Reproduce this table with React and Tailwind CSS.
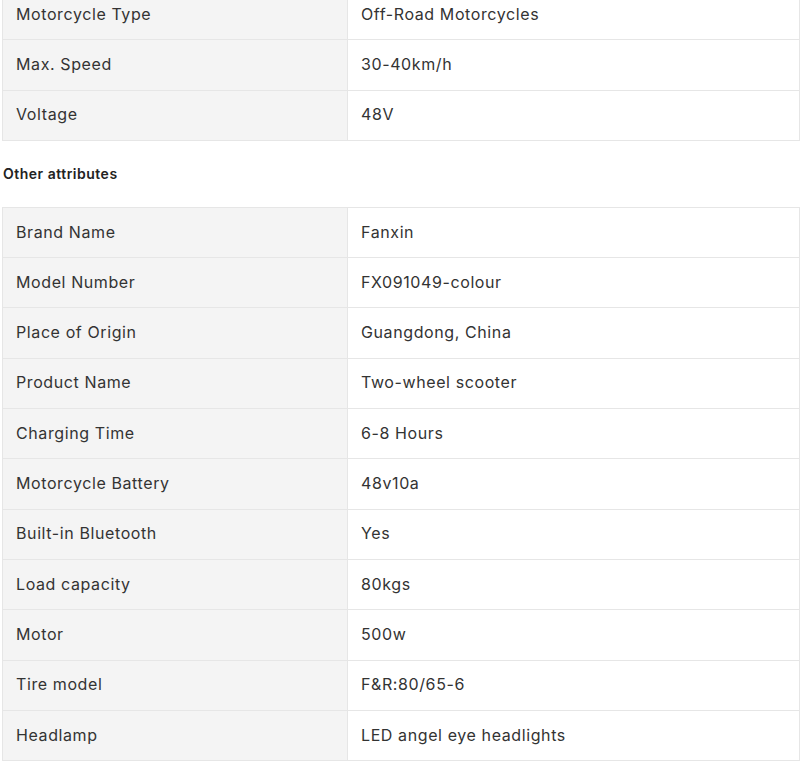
import React from "react";

const mainAttrs = [
  ["Motorcycle Type", "Off-Road Motorcycles"],
  ["Max. Speed", "30-40km/h"],
  ["Voltage", "48V"],
];

const otherAttrs = [
  ["Brand Name", "Fanxin"],
  ["Model Number", "FX091049-colour"],
  ["Place of Origin", "Guangdong, China"],
  ["Product Name", "Two-wheel scooter"],
  ["Charging Time", "6-8 Hours"],
  ["Motorcycle Battery", "48v10a"],
  ["Built-in Bluetooth", "Yes"],
  ["Load capacity", "80kgs"],
  ["Motor", "500w"],
  ["Tire model", "F&R:80/65-6"],
  ["Headlamp", "LED angel eye headlights"],
];

function AttrTable({ rows }) {
  return (
    <table className="w-full border-collapse table-fixed">
      <tbody>
        {rows.map(([k, v]) => (
          <tr key={k} className="h-[50.3px]">
            <td className="w-[345px] border border-[#e6e6e6] bg-[#f4f4f4] px-[13px] pt-0 pb-[2px] text-[16px] tracking-[0.6px] text-[#333]">
              {k}
            </td>
            <td className="border border-[#e6e6e6] bg-white px-[13px] pt-0 pb-[2px] text-[16px] tracking-[0.6px] text-[#333]">
              {v}
            </td>
          </tr>
        ))}
      </tbody>
    </table>
  );
}

export default function App() {
  return (
    <div className="h-[762px] overflow-hidden bg-white pl-[2px] font-['Inter','Liberation_Sans',sans-serif]">
      {/* first table is scrolled partly out of view */}
      <div className="-mt-[11px]">
        <AttrTable rows={mainAttrs} />
      </div>
      <div className="flex h-[66px] items-center pl-px text-[14px] font-semibold tracking-[0.5px] text-[#222]">
        Other attributes
      </div>
      <AttrTable rows={otherAttrs} />
    </div>
  );
}
